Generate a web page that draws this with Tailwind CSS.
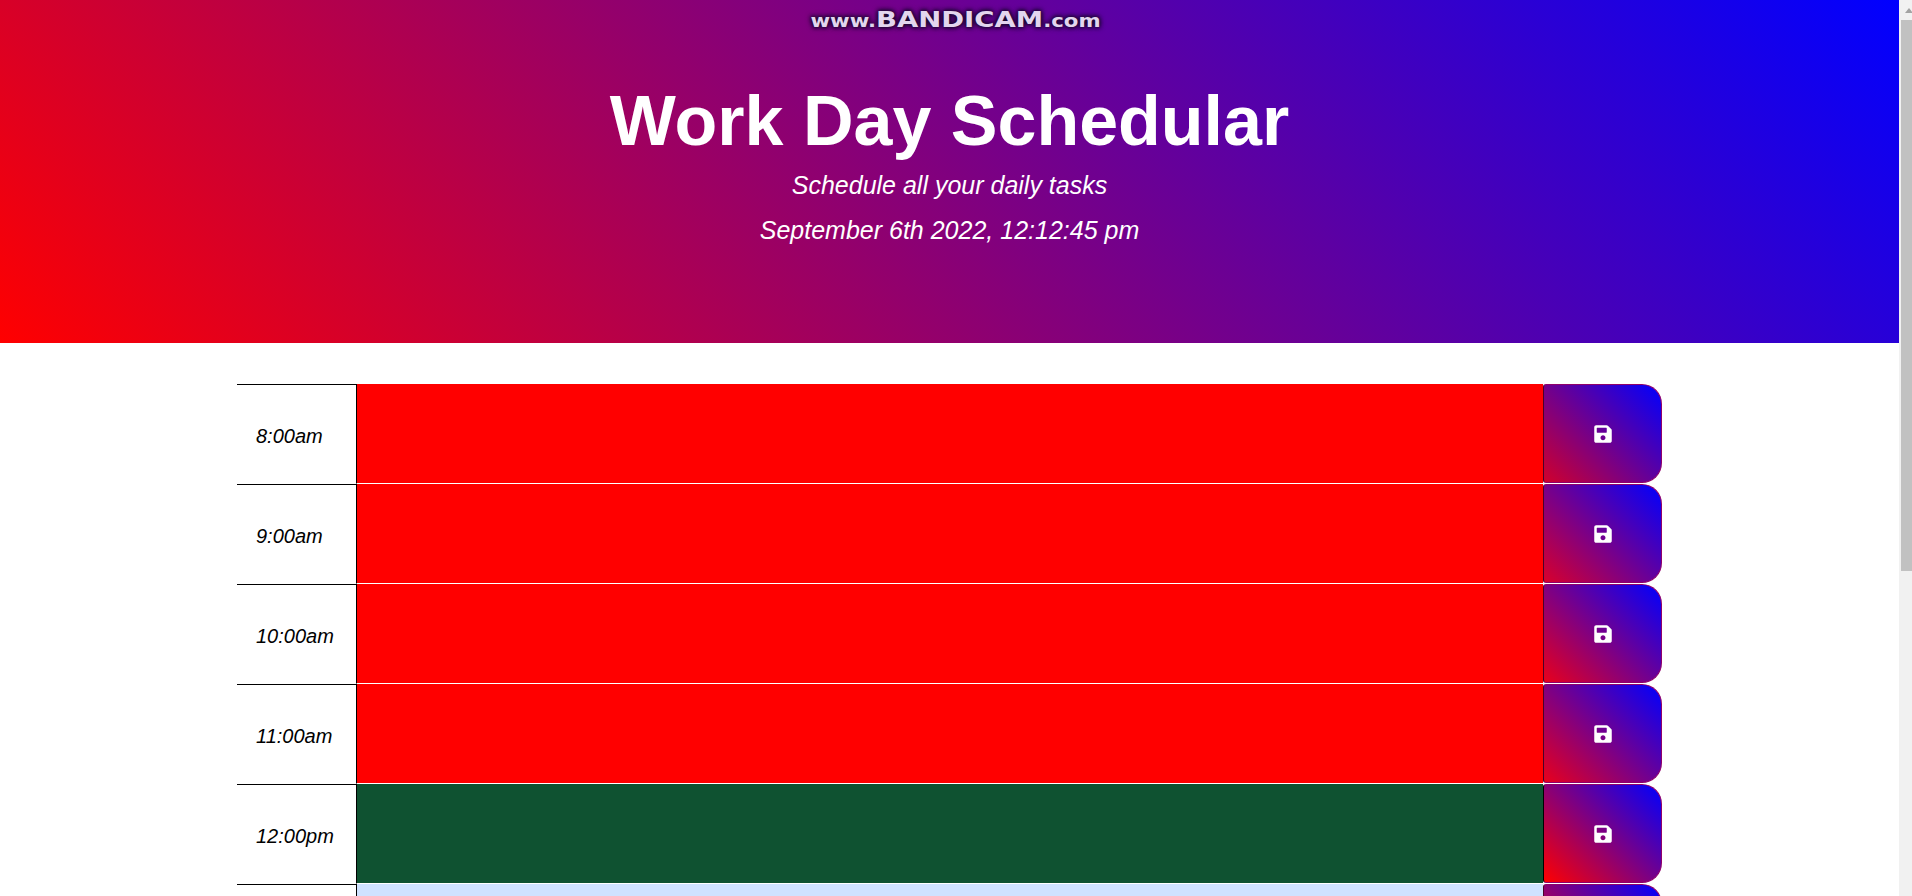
<!DOCTYPE html>
<html lang="en">
<head>
  <meta charset="UTF-8" />
  <meta name="viewport" content="width=device-width, initial-scale=1.0"/>
  <title>Work Day Schedular</title>
  <script src="https://cdn.jsdelivr.net/npm/@tailwindcss/browser@4"></script>
</head>
<body class="h-[896px] flex overflow-hidden bg-white font-['Liberation_Sans',sans-serif] text-black">

  <main class="w-[1899px] h-[896px] shrink-0 overflow-hidden">
    <!-- Header -->
    <header class="relative h-[343px] flex flex-col items-center bg-[linear-gradient(45deg,#ff0000,#0000ff)] text-white">
      <div class="absolute top-[3px] left-[6px] w-full flex justify-center items-baseline scale-x-[1.25] font-['DejaVu_Sans',sans-serif] font-bold text-[#e3d6ee] [text-shadow:0_0_4px_#1a0a30,0_0_4px_#1a0a30,0_0_6px_#1a0a30]">
        <span class="text-[17px]">www.</span><span class="text-[22px]">BANDICAM</span><span class="text-[17px]">.com</span>
      </div>
      <h1 class="mt-[78px] text-[70px] leading-[86px] font-bold">Work Day Schedular</h1>
      <p class="mt-[7px] text-[25px] leading-[29px] italic">Schedule all your daily tasks</p>
      <p class="mt-[16px] text-[25px] leading-[29px] italic">September 6th 2022, 12:12:45 pm</p>
    </header>

    <!-- Time blocks -->
    <section class="mt-[41px] ml-[237px] w-[1425px]">
      <div class="flex h-[100px]">
        <div class="w-[119px] shrink-0 border-t border-black pl-[19px] pt-[40px] text-[20px] leading-[23px] italic">8:00am</div>
        <div class="flex-1 bg-[#ff0000] border-l border-l-black border-b border-b-white"></div>
        <button class="w-[119px] h-[99px] shrink-0 flex items-center justify-center rounded-l-[3px] rounded-r-[20px] border border-[#90006a] border-l-[#4a0028] bg-[linear-gradient(45deg,#d0002c,#0000ff)] text-white">
          <svg class="w-[18px] h-[20px]" viewBox="0 0 448 512" fill="currentColor"><path d="M433.941 129.941l-83.882-83.882A48 48 0 0 0 316.118 32H48C21.49 32 0 53.49 0 80v352c0 26.51 21.49 48 48 48h352c26.51 0 48-21.49 48-48V163.882a48 48 0 0 0-14.059-33.941zM224 416c-35.346 0-64-28.654-64-64 0-35.346 28.654-64 64-64s64 28.654 64 64c0 35.346-28.654 64-64 64zm96-304.52V212c0 6.627-5.373 12-12 12H76c-6.627 0-12-5.373-12-12V108c0-6.627 5.373-12 12-12h228.52c3.183 0 6.235 1.264 8.485 3.515l3.48 3.48A11.996 11.996 0 0 1 320 111.48z"/></svg>
        </button>
      </div>
      <div class="flex h-[100px]">
        <div class="w-[119px] shrink-0 border-t border-black pl-[19px] pt-[40px] text-[20px] leading-[23px] italic">9:00am</div>
        <div class="flex-1 bg-[#ff0000] border-l border-l-black border-b border-b-white"></div>
        <button class="w-[119px] h-[99px] shrink-0 flex items-center justify-center rounded-l-[3px] rounded-r-[20px] border border-[#90006a] border-l-[#4a0028] bg-[linear-gradient(45deg,#d8002c,#0000ff)] text-white">
          <svg class="w-[18px] h-[20px]" viewBox="0 0 448 512" fill="currentColor"><path d="M433.941 129.941l-83.882-83.882A48 48 0 0 0 316.118 32H48C21.49 32 0 53.49 0 80v352c0 26.51 21.49 48 48 48h352c26.51 0 48-21.49 48-48V163.882a48 48 0 0 0-14.059-33.941zM224 416c-35.346 0-64-28.654-64-64 0-35.346 28.654-64 64-64s64 28.654 64 64c0 35.346-28.654 64-64 64zm96-304.52V212c0 6.627-5.373 12-12 12H76c-6.627 0-12-5.373-12-12V108c0-6.627 5.373-12 12-12h228.52c3.183 0 6.235 1.264 8.485 3.515l3.48 3.48A11.996 11.996 0 0 1 320 111.48z"/></svg>
        </button>
      </div>
      <div class="flex h-[100px]">
        <div class="w-[119px] shrink-0 border-t border-black pl-[19px] pt-[40px] text-[20px] leading-[23px] italic">10:00am</div>
        <div class="flex-1 bg-[#ff0000] border-l border-l-black border-b border-b-white"></div>
        <button class="w-[119px] h-[99px] shrink-0 flex items-center justify-center rounded-l-[3px] rounded-r-[20px] border border-[#90006a] border-l-[#4a0028] bg-[linear-gradient(45deg,#e8001c,#0000ff)] text-white">
          <svg class="w-[18px] h-[20px]" viewBox="0 0 448 512" fill="currentColor"><path d="M433.941 129.941l-83.882-83.882A48 48 0 0 0 316.118 32H48C21.49 32 0 53.49 0 80v352c0 26.51 21.49 48 48 48h352c26.51 0 48-21.49 48-48V163.882a48 48 0 0 0-14.059-33.941zM224 416c-35.346 0-64-28.654-64-64 0-35.346 28.654-64 64-64s64 28.654 64 64c0 35.346-28.654 64-64 64zm96-304.52V212c0 6.627-5.373 12-12 12H76c-6.627 0-12-5.373-12-12V108c0-6.627 5.373-12 12-12h228.52c3.183 0 6.235 1.264 8.485 3.515l3.48 3.48A11.996 11.996 0 0 1 320 111.48z"/></svg>
        </button>
      </div>
      <div class="flex h-[100px]">
        <div class="w-[119px] shrink-0 border-t border-black pl-[19px] pt-[40px] text-[20px] leading-[23px] italic">11:00am</div>
        <div class="flex-1 bg-[#ff0000] border-l border-l-black border-b border-b-white"></div>
        <button class="w-[119px] h-[99px] shrink-0 flex items-center justify-center rounded-l-[3px] rounded-r-[20px] border border-[#90006a] border-l-[#4a0028] bg-[linear-gradient(45deg,#e8001c,#0000ff)] text-white">
          <svg class="w-[18px] h-[20px]" viewBox="0 0 448 512" fill="currentColor"><path d="M433.941 129.941l-83.882-83.882A48 48 0 0 0 316.118 32H48C21.49 32 0 53.49 0 80v352c0 26.51 21.49 48 48 48h352c26.51 0 48-21.49 48-48V163.882a48 48 0 0 0-14.059-33.941zM224 416c-35.346 0-64-28.654-64-64 0-35.346 28.654-64 64-64s64 28.654 64 64c0 35.346-28.654 64-64 64zm96-304.52V212c0 6.627-5.373 12-12 12H76c-6.627 0-12-5.373-12-12V108c0-6.627 5.373-12 12-12h228.52c3.183 0 6.235 1.264 8.485 3.515l3.48 3.48A11.996 11.996 0 0 1 320 111.48z"/></svg>
        </button>
      </div>
      <div class="flex h-[100px]">
        <div class="w-[119px] shrink-0 border-t border-black pl-[19px] pt-[40px] text-[20px] leading-[23px] italic">12:00pm</div>
        <div class="flex-1 bg-[#0f5231] border-l border-l-black border-b border-b-white"></div>
        <button class="w-[119px] h-[99px] shrink-0 flex items-center justify-center rounded-l-[3px] rounded-r-[20px] border border-[#90006a] border-l-black bg-[linear-gradient(45deg,#ff0000,#0000ff)] text-white">
          <svg class="w-[18px] h-[20px]" viewBox="0 0 448 512" fill="currentColor"><path d="M433.941 129.941l-83.882-83.882A48 48 0 0 0 316.118 32H48C21.49 32 0 53.49 0 80v352c0 26.51 21.49 48 48 48h352c26.51 0 48-21.49 48-48V163.882a48 48 0 0 0-14.059-33.941zM224 416c-35.346 0-64-28.654-64-64 0-35.346 28.654-64 64-64s64 28.654 64 64c0 35.346-28.654 64-64 64zm96-304.52V212c0 6.627-5.373 12-12 12H76c-6.627 0-12-5.373-12-12V108c0-6.627 5.373-12 12-12h228.52c3.183 0 6.235 1.264 8.485 3.515l3.48 3.48A11.996 11.996 0 0 1 320 111.48z"/></svg>
        </button>
      </div>
      <!-- next row is cut off by the fold, only its top edge shows -->
      <div class="flex h-[100px]">
        <div class="w-[119px] shrink-0 border-t border-black"></div>
        <div class="flex-1 bg-[#cfe2ff] border-l border-l-black"></div>
        <div class="w-[119px] h-[99px] shrink-0 rounded-l-[3px] rounded-r-[20px] border border-[#90006a] border-l-[#4a0028] bg-[linear-gradient(45deg,#ff0000,#0000ff)]"></div>
      </div>
    </section>
  </main>

  <!-- Scrollbar -->
  <aside class="w-[13px] shrink-0 flex flex-col bg-[#f1f1f1]">
    <div class="h-[20px] pl-[6px] pt-[8px]">
      <div class="w-0 h-0 border-l-[4px] border-r-[4px] border-b-[5px] border-l-transparent border-r-transparent border-b-[#a3a3a3]"></div>
    </div>
    <div class="h-[551px] ml-[2px] bg-[#c1c1c1]"></div>
  </aside>

</body>
</html>
